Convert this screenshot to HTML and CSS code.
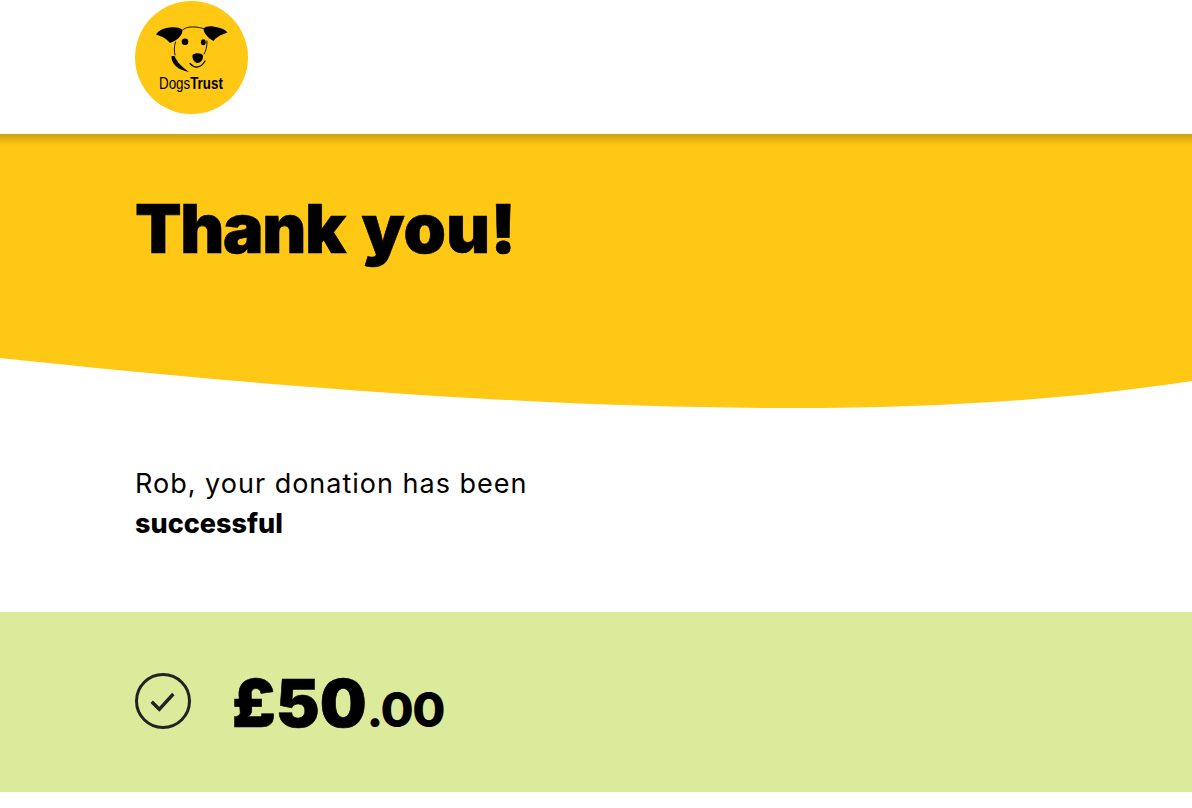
FILE: index.html
```html
<!DOCTYPE html>
<html lang="en">
<head>
  <meta charset="UTF-8">
  <meta name="viewport" content="width=device-width, initial-scale=1">
  <title>Dogs Trust - Thank you</title>
  <link rel="stylesheet" href="styles.css">
</head>
<body>
  <header class="header">
    <svg class="logo" width="113" height="113" viewBox="0 0 113 113">
      <circle cx="56.5" cy="56.5" r="56.5" fill="#fec814"/>
      <!-- ears -->
      <path d="M21 33.5C24 29 29 27 35 26.5C40 26 45 26.5 47.5 29C47.5 34 43 39 35 42C32 38.5 29 36 21 33.5Z" fill="#000"/>
      <path d="M92.5 31.5C90 28.5 87 27.5 83 26.5C78 25 72 24 68.5 27.5C68.5 32 73 37 78.5 40C81 36.5 85 34 92.5 31.5Z" fill="#000"/>
      <!-- head -->
      <g fill="none" stroke="#000" stroke-linecap="round">
        <path d="M47.5 29C51 26 57 24.5 68.5 27.5" stroke-width=".9"/>
        <path d="M40.5 41C39 46 39 50 40 54" stroke-width=".9"/>
        <path d="M72 40C72 46 71 50 69 53" stroke-width=".9"/>
        <path d="M55 62.5C60 68 66 67 70 60" stroke-width="1.2"/>
      </g>
      <path d="M36.5 55C36 63 43 69 54 71C47 66 42 61 39.5 55Z" fill="#000"/>
      <circle cx="50" cy="40.7" r="3.3" fill="#000"/>
      <ellipse cx="68.3" cy="41.3" rx="2.4" ry="3" fill="#000"/>
      <path d="M57.5 54C60 51.5 66 51.5 68 54.5C68.5 58 66 62 62.5 62C59 61.5 57 57.5 57.5 54Z" fill="#000"/>
      <text class="logo-text" transform="translate(24 87.5) scale(.81 1)">Dogs<tspan class="logo-strong">Trust</tspan></text>
    </svg>
  </header>

  <section class="hero">
    <h1><span class="tight">Thank</span> you!</h1>
  </section>
  <svg class="wave" width="1192" height="50" viewBox="0 0 1192 50">
    <path d="M0 0C300 32 560 50 790 50C950 50 1080 40 1192 23V0Z" fill="#fec814"/>
  </svg>

  <section class="message">
    <p>Rob, your donation has been<br><strong>successful</strong></p>
  </section>

  <section class="summary">
    <svg class="tick" width="56" height="56" viewBox="0 0 56 56">
      <circle cx="28" cy="28" r="26.5" fill="none" stroke="#222" stroke-width="3"/>
      <path d="M16.7 28.7L24.3 36.3L38.3 21" fill="none" stroke="#222" stroke-width="3.4"/>
    </svg>
    <div class="amount">£50<span class="pence">.00</span></div>
  </section>
</body>
</html>
```

FILE: styles.css
```css
body {
  margin: 0;
  background: white;
  color: #000;
  font-family: 'Inter', sans-serif;
}

.header {
  height: 134px;
  padding: 1px 135px 0;
  box-sizing: border-box;
}

.logo {
  display: block;
}

.logo-text {
  font-family: 'Liberation Sans', sans-serif;
  font-size: 16.5px;
}

.logo-strong {
  font-weight: 700;
}

.hero {
  height: 224px;
  padding: 54px 135px 0;
  box-sizing: border-box;
  background: linear-gradient(rgba(0, 0, 0, 0.17) 2px, transparent 11px), #fec814;
}

.hero h1 {
  margin: 0;
  font-size: 68px;
  line-height: 80px;
  font-weight: 900;
  word-spacing: 3px;
  -webkit-text-stroke: 0.6px #000;
}

.tight {
  letter-spacing: -1.4px;
}

.wave {
  display: block;
}

.message {
  padding: 56px 135px 68px;
}

.message p {
  margin: 0;
  font-size: 27px;
  line-height: 40px;
  letter-spacing: 1px;
}

.message strong {
  font-weight: 800;
  letter-spacing: 0;
}

.summary {
  display: flex;
  align-items: flex-start;
  gap: 41px;
  height: 180px;
  padding: 61px 135px 0;
  box-sizing: border-box;
  background: #dcea9c;
}

.tick {
  display: block;
}

.amount {
  margin-top: 2px;
  font-size: 66px;
  line-height: 56px;
  font-weight: 900;
  -webkit-text-stroke: 0.6px #000;
}

.pence {
  font-size: 48px;
  font-weight: 800;
  letter-spacing: -1.5px;
  -webkit-text-stroke: 0;
}
```
